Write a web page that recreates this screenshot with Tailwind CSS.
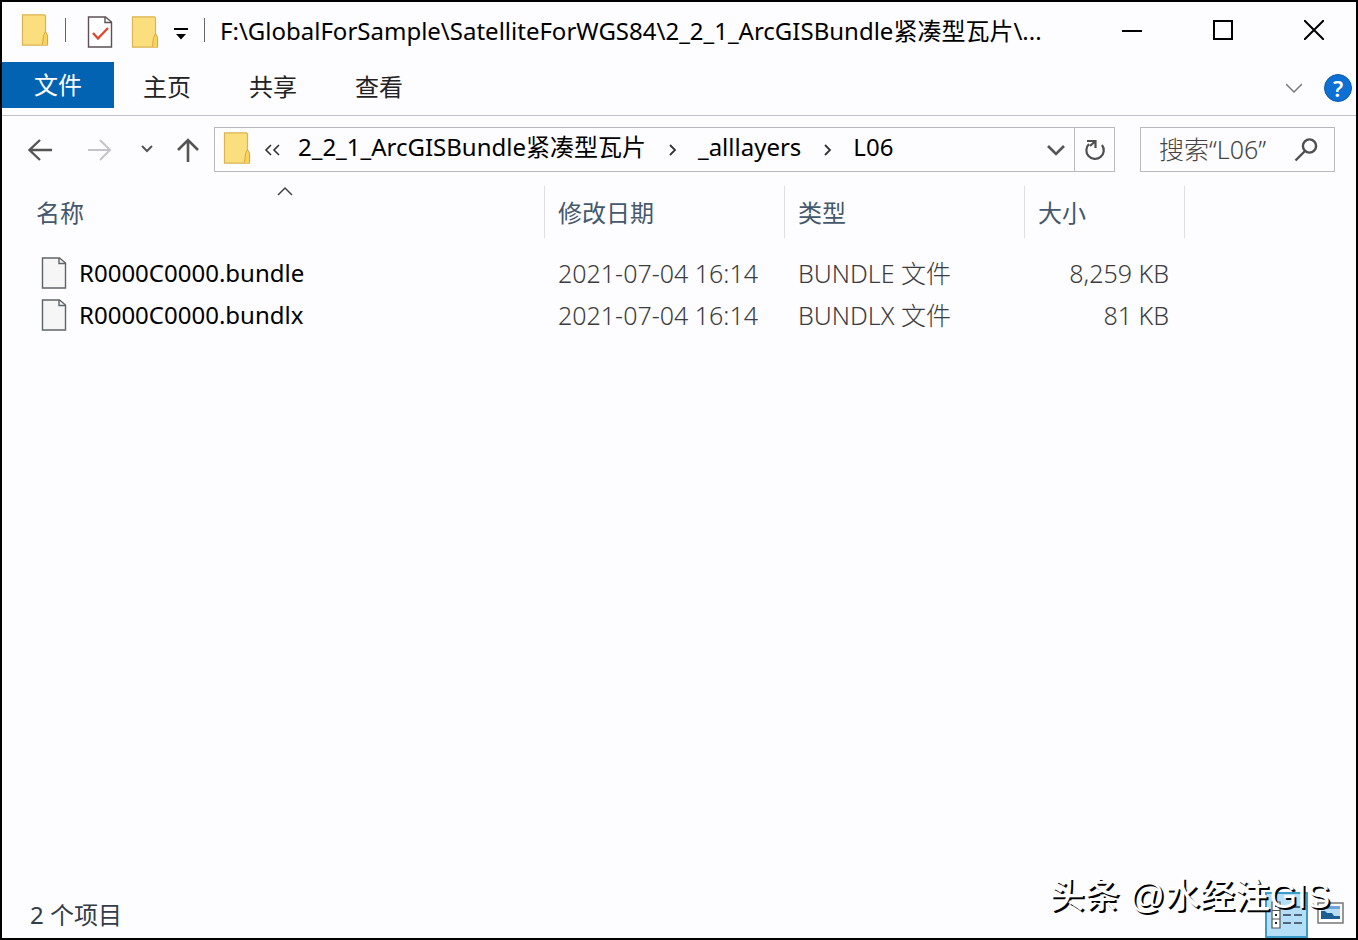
<!DOCTYPE html>
<html lang="zh-CN">
<head>
  <meta charset="UTF-8">
  <meta name="viewport" content="width=device-width, initial-scale=1.0">
  <title>L06</title>
  <script src="https://cdn.jsdelivr.net/npm/@tailwindcss/browser@4"></script>
</head>
<body class="bg-[#fdfcfe] text-black text-[24px] leading-[32px] font-['Noto_Sans','Noto_Sans_CJK_SC',sans-serif]">

  <!-- 图标定义 -->
  <svg class="hidden">
    <symbol id="folder" viewBox="0 0 28 32">
      <path d="M1.500 .8h22l1 1v17l2 3v9.400H1.500z" fill="#fbdf7e" stroke="#dcb455" stroke-width="1.200"/>
      <path d="M21.500 30.500l1-9 2-4 2 4v9" fill="#fbd35c" stroke="#d9a83c" stroke-width="1"/>
    </symbol>
    <symbol id="file" viewBox="0 0 26 32">
      <path d="M1.500 1h17l6 5v25h-23z" fill="#f6f6f7" stroke="#5f6468" stroke-width="1.400"/>
      <path d="M18 1v5.500h6.500" fill="none" stroke="#5f6468" stroke-width="1.400"/>
    </symbol>
  </svg>

  <div class="relative min-h-screen flex flex-col border-2 border-black overflow-hidden">

    <!-- 标题栏 -->
    <header class="h-[60px] flex items-center pl-[19px] pr-8 pb-1">
      <svg class="w-7 h-8 shrink-0"><use href="#folder"/></svg>
      <span class="w-px h-6 bg-[#666] ml-4 shrink-0"></span>
      <button class="ml-[21px] pt-1 shrink-0" aria-label="属性">
        <svg class="w-[26px] h-8" viewBox="0 0 26 32" fill="none">
          <path d="M1.500 1h17l6 5v25h-23z" fill="#fff" stroke="#5c5055" stroke-width="1.400"/>
          <path d="M18 1v5.500h6.500" stroke="#5c5055" stroke-width="1.400"/>
          <path d="M6 17l5 5.500L21 12" stroke="#dd4931" stroke-width="2.400"/>
        </svg>
      </button>
      <button class="ml-[18px] pt-1 shrink-0" aria-label="新建文件夹">
        <svg class="w-7 h-8"><use href="#folder"/></svg>
      </button>
      <button class="ml-[14px] pt-2 shrink-0" aria-label="自定义快速访问工具栏">
        <svg class="w-4 h-4" viewBox="0 0 16 16"><path d="M1 2h14v2H1zM3 8h10l-5 5.500z"/></svg>
      </button>
      <span class="w-px h-6 bg-[#666] ml-[15px] shrink-0"></span>
      <h1 class="ml-[15px] pt-0.5 flex-1 min-w-0 truncate">F:\GlobalForSample\SatelliteForWGS84\2_2_1_ArcGISBundle紧凑型瓦片\...</h1>
      <div class="flex gap-[71px] shrink-0">
        <button aria-label="最小化">
          <svg class="w-5 h-5" viewBox="0 0 20 20"><path d="M0 11h20" stroke="#000" stroke-width="2"/></svg>
        </button>
        <button aria-label="最大化">
          <svg class="w-5 h-5" viewBox="0 0 20 20"><path d="M1 1h18v18H1z" fill="none" stroke="#000" stroke-width="2"/></svg>
        </button>
        <button aria-label="关闭">
          <svg class="w-5 h-5" viewBox="0 0 20 20"><path d="M0 0l20 20M20 0L0 20" stroke="#000" stroke-width="2"/></svg>
        </button>
      </div>
    </header>

    <!-- 功能区 -->
    <nav class="h-[54px] flex items-start border-b border-[#c3c2c8]">
      <button class="w-28 h-[46px] bg-[#0163b1] text-white">文件</button>
      <button class="w-[106px] h-[50px] text-[#222]">主页</button>
      <button class="w-[106px] h-[50px] text-[#222]">共享</button>
      <button class="w-[106px] h-[50px] text-[#222]">查看</button>
      <div class="ml-auto h-[52px] flex items-center gap-[22px] pr-1">
        <button aria-label="展开功能区">
          <svg class="w-4 h-4" viewBox="0 0 16 16" fill="none"><path d="M0 4l8 8 8-8" stroke="#777" stroke-width="1.500"/></svg>
        </button>
        <button class="w-7 h-7 rounded-full bg-[#0b6fd3] border border-[#0b5cae] text-white text-[22px] leading-[26px] font-semibold" aria-label="帮助">?</button>
      </div>
    </nav>

    <!-- 地址栏 -->
    <div class="flex items-center pt-[11px] pr-[21px]">
      <div class="w-[212px] flex items-center pl-[26px] shrink-0">
        <button aria-label="后退">
          <svg class="w-6 h-6" viewBox="0 0 24 24" fill="none" stroke="#555" stroke-width="2.400"><path d="M24 12H1.500M12 2L1.500 12 12 22"/></svg>
        </button>
        <button class="ml-9" aria-label="前进">
          <svg class="w-6 h-6" viewBox="0 0 24 24" fill="none" stroke="#c4c4c8" stroke-width="2"><path d="M0 12h22M12 2l10 10-10 10"/></svg>
        </button>
        <button class="ml-7" aria-label="最近浏览的位置">
          <svg class="w-3.5 h-3" viewBox="0 0 14 12" fill="none" stroke="#555" stroke-width="2"><path d="M2 2l5 5 5-5"/></svg>
        </button>
        <button class="ml-[22px]" aria-label="上移">
          <svg class="w-6 h-6" viewBox="0 0 24 24" fill="none" stroke="#555" stroke-width="2.600"><path d="M12 24V2M2 12L12 2l10 10"/></svg>
        </button>
      </div>
      <div class="flex-1 min-w-0 h-[45px] flex items-center border border-[#b9b8be]">
        <svg class="w-7 h-8 ml-2 mb-1 shrink-0"><use href="#folder"/></svg>
        <svg class="w-4 h-3 ml-[13px] shrink-0" viewBox="0 0 16 12" fill="none" stroke="#333" stroke-width="1.600"><path d="M7 1L2 6l5 5M15 1l-5 5 5 5"/></svg>
        <a href="#" class="ml-[18px] mb-1.5 whitespace-nowrap">2_2_1_ArcGISBundle紧凑型瓦片</a>
        <svg class="w-2 h-3 ml-[23px] shrink-0" viewBox="0 0 8 12" fill="none" stroke="#333" stroke-width="1.800"><path d="M1 1l5 5-5 5"/></svg>
        <a href="#" class="ml-[21px] mb-1.5">_alllayers</a>
        <svg class="w-2 h-3 ml-[23px] shrink-0" viewBox="0 0 8 12" fill="none" stroke="#333" stroke-width="1.800"><path d="M1 1l5 5-5 5"/></svg>
        <a href="#" class="ml-[21px] mb-1.5">L06</a>
        <button class="ml-auto mr-[9px]" aria-label="以前的位置">
          <svg class="w-[18px] h-[18px]" viewBox="0 0 18 18" fill="none"><path d="M1 5l8 8 8-8" stroke="#555" stroke-width="2.600"/></svg>
        </button>
        <button class="w-10 h-full border-l border-[#b9b8be] flex items-center justify-center" aria-label="刷新">
          <svg class="w-[22px] h-[22px]" viewBox="0 0 22 22" fill="none" stroke="#4f4f4f" stroke-width="2.200"><path d="M5 5a8.700 8.700 0 1 0 13 1M3 2h8.500v7M11 2.500L6 7"/></svg>
        </button>
      </div>
      <label class="ml-[25px] w-[195px] h-[45px] flex items-center border border-[#b9b8be] pl-[18px] pr-4 shrink-0">
        <input type="text" aria-label="搜索" placeholder="搜索“L06”" class="flex-1 min-w-0 pb-0.5 text-[25px] font-light placeholder:text-[#444] outline-none">
        <svg class="w-6 h-6 shrink-0" viewBox="0 0 24 24" fill="none" stroke="#4f4f4f" stroke-width="2.400"><circle cx="15.500" cy="8" r="6.600"/><path d="M11 13L1.500 22.500"/></svg>
      </label>
    </div>

    <!-- 文件列表 -->
    <main class="flex-1 pt-[14px]">
      <table class="table-fixed border-separate border-spacing-0 w-[1183px] text-left">
        <thead>
          <tr class="h-[52px] text-[#45586c]">
            <th class="relative w-[543px] border-r border-[#dedde3] pt-0.5 pl-[34px] font-normal">
              名称
              <svg class="absolute top-0 left-[275px] w-4 h-[10px]" viewBox="0 0 16 10" fill="none"><path d="M1 9l7-7 7 7" stroke="#444" stroke-width="1.500"/></svg>
            </th>
            <th class="w-[240px] border-r border-[#dedde3] pt-0.5 pl-[13px] font-normal">修改日期</th>
            <th class="w-[240px] border-r border-[#dedde3] pt-0.5 pl-[13px] font-normal">类型</th>
            <th class="w-[160px] border-r border-[#dedde3] pt-0.5 pl-[13px] font-normal">大小</th>
          </tr>
        </thead>
        <tbody class="text-[25px] text-[#3c3c40] font-light">
          <tr><td class="h-[14px]" colspan="4"></td></tr>
          <tr class="h-[42px]">
            <td class="pl-[39px] text-[24px] text-black font-normal">
              <div class="flex items-center gap-3"><svg class="w-[26px] h-8"><use href="#file"/></svg>R0000C0000.bundle</div>
            </td>
            <td class="pl-[13px]">2021-07-04 16:14</td>
            <td class="pl-[13px]">BUNDLE 文件</td>
            <td class="pr-4 text-right">8,259 KB</td>
          </tr>
          <tr class="h-[42px]">
            <td class="pl-[39px] text-[24px] text-black font-normal">
              <div class="flex items-center gap-3"><svg class="w-[26px] h-8"><use href="#file"/></svg>R0000C0000.bundlx</div>
            </td>
            <td class="pl-[13px]">2021-07-04 16:14</td>
            <td class="pl-[13px]">BUNDLX 文件</td>
            <td class="pr-4 text-right">81 KB</td>
          </tr>
        </tbody>
      </table>
    </main>

    <!-- 状态栏 -->
    <footer class="h-[46px] flex items-center pl-7 pr-3 text-[#333d49]">
      <span>2 个项目</span>
      <div class="ml-auto flex items-center gap-[9px]">
        <button class="w-[43px] h-[46px] bg-[#b5dff6] border-2 border-[#3b9cc9] flex items-center justify-center" aria-label="详细信息">
          <svg class="w-8 h-7" viewBox="0 0 32 28" fill="none">
            <path d="M1 1h8v26H1zM1 9.500h8M1 18h8" fill="#fff" stroke="#555" stroke-width="1.200"/>
            <path d="M4 5h2M4 14h2M4 22h2" stroke="#222" stroke-width="2"/>
            <path d="M12 6h8M23 6h8M12 14h8M23 14h8M12 22h8M23 22h8" stroke="#333d55" stroke-width="1.600"/>
          </svg>
        </button>
        <button class="pb-1" aria-label="大图标">
          <svg class="w-[27px] h-[22px]" viewBox="0 0 27 22">
            <path d="M1 1h25v20H1z" fill="#fff" stroke="#777" stroke-width="1.500"/>
            <path d="M4 4h19v13H4z" fill="#b9dcf4"/>
            <path d="M4 4h19v3H4z" fill="#6ea4dc"/>
            <path d="M4 9h4l2 2h5l2 3h6v3H4z" fill="#1d5e92"/>
          </svg>
        </button>
      </div>
    </footer>

    <!-- 水印 -->
    <div class="absolute right-[26px] bottom-[18px] text-[35px] leading-[48px] whitespace-nowrap text-white text-shadow-[2px_2px_0_#000] font-['Liberation_Sans','Noto_Sans_CJK_SC',sans-serif] font-medium pointer-events-none">头条 @水经注GIS</div>
  </div>

</body>
</html>
